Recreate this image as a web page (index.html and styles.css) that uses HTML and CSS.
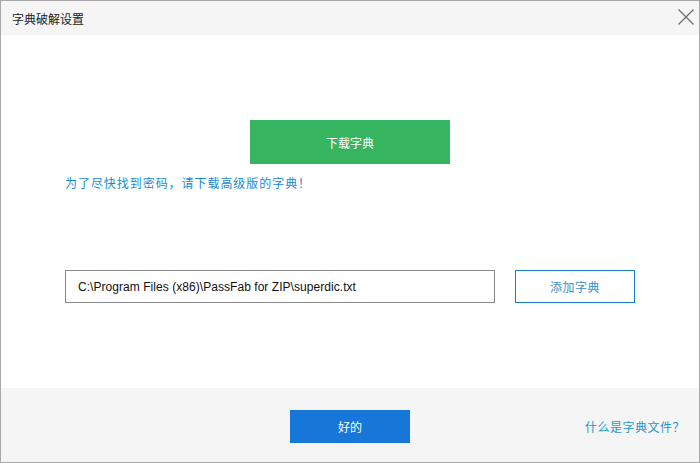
FILE: index.html
```html
<!DOCTYPE html>
<html lang="zh">
<head>
<meta charset="utf-8">
<link rel="stylesheet" href="styles.css">
</head>
<body>
<div class="window">
  <div class="titlebar">
    <span class="title">字典破解设置</span>
    <span class="close" aria-label="关闭">
      <svg width="16" height="16" viewBox="0 0 16 16"><path d="M0.5 0.5L15.5 15.5M15.5 0.5L0.5 15.5" stroke="#6b6b6b" stroke-width="1.2" fill="none"/></svg>
    </span>
  </div>
  <div class="content">
    <div class="download-row">
      <button class="btn-green">下载字典</button>
    </div>
    <p class="hint">为了尽快找到密码，请下载高级版的字典！</p>
    <div class="file-row">
      <div class="path-input">C:\Program Files (x86)\PassFab for ZIP\superdic.txt</div>
      <button class="btn-outline">添加字典</button>
    </div>
  </div>
  <div class="footer">
    <button class="btn-blue">好的</button>
    <a class="help-link">什么是字典文件？</a>
  </div>
</div>
</body>
</html>
```
FILE: styles.css
```css
* { box-sizing: border-box; }
html, body { margin: 0; padding: 0; }
body {
  width: 700px;
  height: 463px;
  font-family: "Noto Sans CJK SC", "Noto Sans", sans-serif;
  font-size: 12px;
  background: #ffffff;
}
.window {
  width: 700px;
  height: 463px;
  border: 1px solid #a8a8a8;
  display: flex;
  flex-direction: column;
  background: #ffffff;
}
.titlebar {
  height: 34px;
  flex: none;
  background: #f5f5f5;
  display: flex;
  align-items: center;
  justify-content: space-between;
  padding: 0 5px 0 11px;
}
.title {
  color: #1a1a1a;
  font-size: 12px;
  line-height: 16px;
  margin-top: 2px;
}
.close {
  width: 16px;
  height: 16px;
  display: flex;
  margin-top: -2px;
}
.content {
  flex: 1;
  background: #ffffff;
  padding: 85px 64px 0 64px;
}
.download-row {
  display: flex;
  justify-content: center;
}
.btn-green {
  width: 200px;
  height: 44px;
  border: none;
  background: #36b460;
  color: #ffffff;
  font-family: inherit;
  font-size: 12px;
  padding: 0;
  cursor: pointer;
}
.hint {
  margin: 10px 0 0 0;
  color: #1c8ad0;
  font-size: 12px;
  line-height: 18px;
  letter-spacing: 0.95px;
}
.file-row {
  margin-top: 78px;
  display: flex;
  align-items: center;
  gap: 20px;
}
.path-input {
  width: 430px;
  height: 33px;
  border: 1px solid #8a8a8a;
  background: #ffffff;
  padding: 0 0 0 12px;
  display: flex;
  align-items: center;
  font-family: "Liberation Sans", "DejaVu Sans", sans-serif;
  font-size: 12px;
  letter-spacing: 0.05px;
  color: #111111;
}
.btn-outline {
  width: 120px;
  height: 33px;
  border: 1px solid #1a7dd0;
  background: #ffffff;
  color: #3a8fc8;
  font-family: inherit;
  font-size: 12px;
  padding: 0;
  letter-spacing: 0.5px;
}
.footer {
  height: 74px;
  flex: none;
  background: #f5f5f5;
  display: flex;
  align-items: center;
  padding-top: 3px;
}
.btn-blue {
  margin-left: 289px;
  width: 120px;
  height: 33px;
  border: none;
  background: #1677d9;
  color: #ffffff;
  font-family: inherit;
  font-size: 12px;
  padding: 0;
}
.help-link {
  margin-left: auto;
  margin-right: 14px;
  color: #1e98c8;
  font-size: 12px;
  letter-spacing: 0.5px;
  cursor: pointer;
}
```
